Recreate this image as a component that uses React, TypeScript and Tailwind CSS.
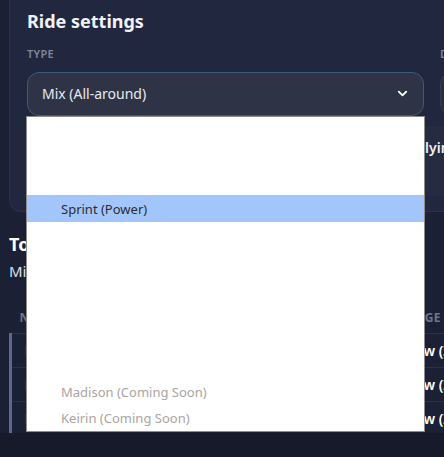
import { ChevronDown } from "lucide-react";

const options = [
    { label: "", state: "hidden" },
    { label: "", state: "hidden" },
    { label: "", state: "hidden" },
    { label: "Sprint (Power)", state: "active" },
    { label: "", state: "hidden" },
    { label: "", state: "hidden" },
    { label: "", state: "hidden" },
    { label: "", state: "hidden" },
    { label: "", state: "hidden" },
    { label: "", state: "hidden" },
    { label: "Madison (Coming Soon)", state: "disabled" },
    { label: "Keirin (Coming Soon)", state: "disabled" },
];

const rows = ["Lap 1", "Lap 2", "Lap 3"];

export default function App() {
    return (
        <div
            className="w-[444px] h-[457px] overflow-hidden bg-[#161a2b] text-white"
            style={{ fontFamily: '"Noto Sans", "Open Sans", sans-serif' }}
        >
            <div className="h-[433px] overflow-hidden bg-[#1c2035] pl-[9px]">
                {/* Ride settings card */}
                <section className="w-[900px] h-[212px] rounded-b-xl border-x border-b border-[#2c3149] bg-[#222740] px-[17px] pt-[9px]">
                    <h2 className="text-[18px] font-bold leading-[24px] text-[#f1f3f8]">
                        Ride settings
                    </h2>

                    <div className="mt-[14px] grid grid-cols-[397px_397px] gap-x-4">
                        <div>
                            <div className="text-[11px] font-semibold uppercase leading-[14px] tracking-wide text-[#7f869b]">
                                Type
                            </div>
                            <div className="relative mt-[11px]">
                                <div className="flex h-[44px] items-center justify-between rounded-xl border border-[#3d5b7c] bg-[#2e3346] pb-[2px] pl-[14px] pr-[13px]">
                                    <span className="text-[14px] text-[#e8eaf0]">Mix (All-around)</span>
                                    <ChevronDown size={15} strokeWidth={3} className="text-white" />
                                </div>

                                {/* Open native-style list */}
                                <div className="absolute left-[-1px] right-[-1px] top-full z-10 border border-[#8d8d8d] bg-white">
                                    {options.map((opt, i) => (
                                        <div
                                            key={i}
                                            className={
                                                opt.state === "active"
                                                    ? "flex h-[26.17px] items-center bg-[#a2c6fb] pl-[34px] pt-[2px] text-[13px] text-[#2b2b33]"
                                                    : opt.state === "disabled"
                                                      ? "flex h-[26.17px] items-center pl-[34px] pt-[2px] text-[13px] text-[#aca3a1]"
                                                      : "h-[26.17px]"
                                            }
                                        >
                                            {opt.label}
                                        </div>
                                    ))}
                                </div>
                            </div>
                        </div>
                        <div>
                            <div className="text-[11px] font-semibold uppercase leading-[14px] tracking-wide text-[#7f869b]">
                                Distance
                            </div>
                            <div className="mt-[11px] h-[44px] rounded-xl border border-[#343a52] bg-[#2a2f44]" />
                        </div>
                    </div>

                    <div className="mt-[10px] flex h-[70px] items-start rounded-lg bg-[#262b42] pl-[315px] pt-[11px]">
                        <span className="text-[14px] font-semibold text-[#eef0f5]">Apply underlying power</span>
                    </div>
                </section>

                {/* Totals */}
                <h3 className="mt-[20px] text-[18px] font-bold leading-[24px] text-white">Totals</h3>
                <p className="mt-[5px] text-[15px] leading-[20px] text-[#dde0e8]">Mix (All-around)</p>

                <table className="mt-[28px] w-[700px] table-fixed border-collapse">
                    <thead>
                        <tr>
                            <th className="w-[380px] pb-[6px] pl-[9px] text-left text-[12px] font-bold uppercase tracking-wide text-[#6f768a]">
                                Name
                            </th>
                            <th className="pb-[6px] text-left text-[12px] font-bold uppercase tracking-wide text-[#6f768a]">
                                Charge
                            </th>
                        </tr>
                    </thead>
                    <tbody>
                        {rows.map((r) => (
                            <tr key={r} className="h-[34px] border-t border-[#2b3046]">
                                <td className="border-l-[3px] border-[#5a6a8c] pl-[13px] text-[14px] font-bold text-white">
                                    {r}
                                </td>
                                <td className="pl-[17px] text-[14px] font-semibold text-white">Low (Z1)</td>
                            </tr>
                        ))}
                    </tbody>
                </table>
            </div>
        </div>
    );
}
